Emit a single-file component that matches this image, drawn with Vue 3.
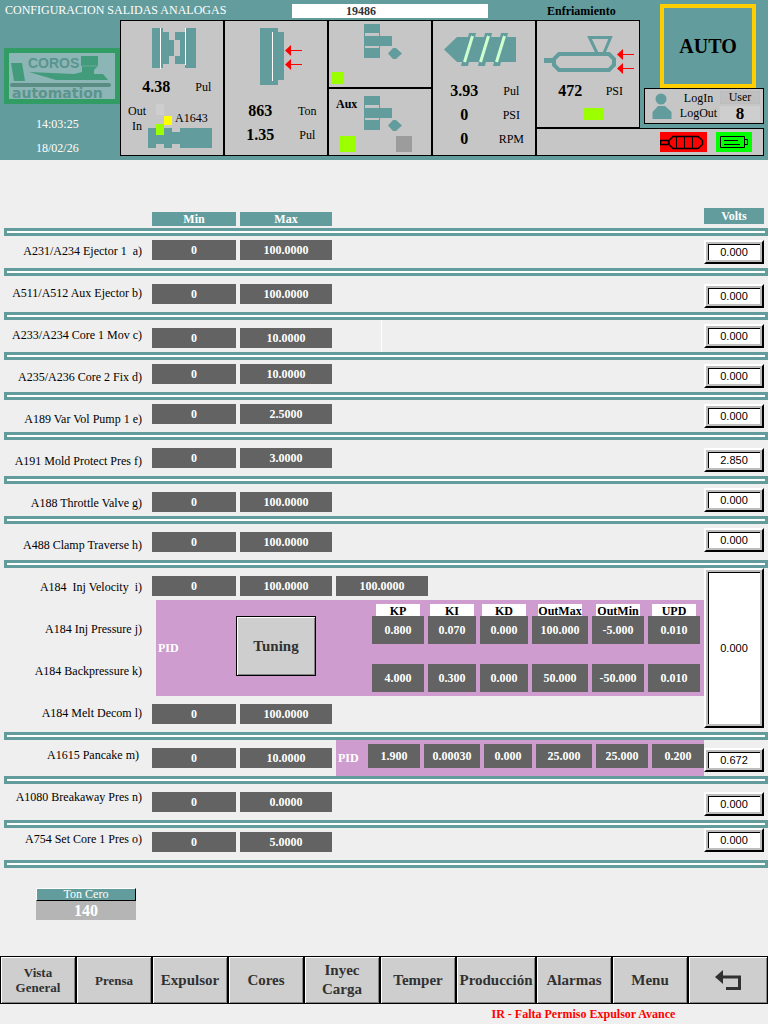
<script setup>
const LABEL_PITCH = 42
const LABEL_TOP = 13
const BAR = 8

const groups = [
  { rows: [{ name: 'A231/A234 Ejector 1  a)', height: 32, min: '0', max: '100.0000' }], volts: '0.000', align: 'upper' },
  { rows: [{ name: 'A511/A512 Aux Ejector b)', height: 36, min: '0', max: '100.0000' }], volts: '0.000', align: 'deep' },
  { rows: [{ name: 'A233/A234 Core 1 Mov c)', height: 32, min: '0', max: '10.0000', mark: true }], volts: '0.000', align: 'low' },
  { rows: [{ name: 'A235/A236 Core 2 Fix d)', height: 32, min: '0', max: '10.0000' }], volts: '0.000', align: 'upper' },
  { rows: [{ name: 'A189 Var Vol Pump 1 e)', height: 32, min: '0', max: '2.5000' }], volts: '0.000', align: 'upper' },
  { rows: [{ name: 'A191 Mold Protect Pres f)', height: 36, min: '0', max: '3.0000' }], volts: '2.850', align: 'deep' },
  { rows: [{ name: 'A188 Throttle Valve g)', height: 32, min: '0', max: '100.0000' }], volts: '0.000', align: 'low' },
  { rows: [{ name: 'A488 Clamp Traverse h)', height: 36, min: '0', max: '100.0000' }], volts: '0.000', align: 'low' },
  {
    rows: [
      { name: 'A184  Inj Velocity  i)', height: 32, min: '0', max: '100.0000', extra: '100.0000' },
      { name: 'A184 Inj Pressure j)', height: 48, panel: true },
      { name: 'A184 Backpressure k)', height: 48 },
      { name: 'A184 Melt Decom l)', height: 36, min: '0', max: '100.0000' }
    ],
    volts: '0.000',
    align: 'tall'
  },
  {
    rows: [{ name: 'A1615 Pancake m) ', height: 36, min: '0', max: '10.0000', pid: ['1.900', '0.00030', '0.000', '25.000', '25.000', '0.200'] }],
    volts: '0.672',
    align: 'deep'
  },
  { rows: [{ name: 'A1080 Breakaway Pres n)', height: 36, min: '0', max: '0.0000' }], volts: '0.000', align: 'deep' },
  { rows: [{ name: 'A754 Set Core 1 Pres o)', height: 32, min: '0', max: '5.0000' }], volts: '0.000', align: 'raised' }
]

// Labels run on an even pitch of their own, so each one is padded from its row's top.
let rowTop = BAR
let index = 0
for (const group of groups) {
  for (const row of group.rows) {
    row.labelPad = LABEL_TOP + LABEL_PITCH * index - rowTop
    rowTop += row.height
    index += 1
  }
  rowTop += BAR
}

const pidNames = ['KP', 'KI', 'KD', 'OutMax', 'OutMin', 'UPD']
const pidRows = [
  { name: 'Inj Pressure', values: ['0.800', '0.070', '0.000', '100.000', '-5.000', '0.010'] },
  { name: 'Backpressure', values: ['4.000', '0.300', '0.000', '50.000', '-50.000', '0.010'] }
]

const nav = [
  { text: 'Vista General', small: true },
  { text: 'Prensa', small: true },
  { text: 'Expulsor' },
  { text: 'Cores' },
  { text: 'Inyec Carga' },
  { text: 'Temper' },
  { text: 'Producción' },
  { text: 'Alarmas' },
  { text: 'Menu' }
]
</script>

<template>
  <div class="screen">
    <header class="top">
      <div class="titlebar">
        <h1>CONFIGURACION SALIDAS ANALOGAS</h1>
        <input class="part" value="19486" readonly aria-label="Numero de molde" />
        <span class="mode">Enfriamiento</span>
      </div>

      <div class="side">
        <svg class="logo" viewBox="0 0 116 56" width="116" height="56" role="img" aria-label="Coros automation">
          <rect width="116" height="56" fill="#319c63" />
          <rect x="5" y="5" width="106" height="46" fill="#8cb5b5" />
          <path d="M7 15H18L21 33H10Z" fill="#429c7b" />
          <path d="M25 24L70 26L78 24V18H77V8H94V18L90 22V26H99L104 32H52Z" fill="#429c7b" />
          <path d="M78 18H94" stroke="#6baa9a" />
          <rect x="6" y="35" width="101" height="4" rx="2" fill="#5a8c84" />
          <text x="24" y="20" class="brand">COROS</text>
          <text x="8" y="50" class="brand-sub">automation</text>
        </svg>
        <time>14:03:25</time>
        <time>18/02/26</time>
      </div>

      <section class="tile clamp">
        <svg viewBox="121 21 102 54" width="102" height="54" aria-hidden="true">
          <path d="M152 28H163V32H169V40H174V56H169V64H163V68H152ZM175 32H185V28H196V68H185V64H175V56H180V40H175Z" fill="#639c9c" />
          <path d="M160.500 28V69M185.500 28V65" stroke="#fff" />
        </svg>
        <p class="reading"><b>4.38</b><span>Pul</span></p>
        <svg viewBox="121 99 102 56" width="102" height="56">
          <path d="M148 128H172V132H180V128H212V148H180V144H172V148H164V144H156V148H148Z" fill="#639c9c" />
          <rect x="156" y="104" width="8" height="11" fill="#cecece" />
          <rect x="164" y="116" width="8" height="9" fill="#ff0" />
          <rect x="156" y="124" width="8" height="11" fill="#9cff00" />
          <text x="128" y="115">Out</text>
          <text x="132" y="130">In</text>
          <text x="175" y="122">A1643</text>
        </svg>
      </section>

      <section class="tile tonnage">
        <svg viewBox="225 21 102 78" width="102" height="78" aria-hidden="true">
          <path d="M260 28H278V32H284V80H278V85H260Z" fill="#639c9c" />
          <path d="M272.500 32V81" stroke="#fff" />
          <path d="M285 50.500L291 45V56ZM285 64.500L291 59V70Z" fill="#f00" />
          <path d="M290 50.500H302M290 64.500H302" stroke="#f00" />
        </svg>
        <p class="reading"><b>863</b><span>Ton</span></p>
        <p class="reading"><b>1.35</b><span>Pul</span></p>
      </section>

      <section class="tile eject">
        <svg viewBox="329 21 102 66" width="102" height="66" aria-hidden="true">
          <path d="M364 24H380V36H392V46H380V58H364Z" fill="#639c9c" />
          <path d="M365 33H379V36H365ZM365 46H379V48H365Z" fill="#c6c6c6" />
          <path d="M388 53.500L393 48H396L402 53.500L396 59H393Z" fill="#639c9c" />
          <rect x="332" y="72" width="12" height="12" fill="#9cff00" />
        </svg>
      </section>

      <section class="tile aux">
        <svg viewBox="329 89 102 66" width="102" height="66">
          <path d="M364 96H380V108H392V118H380V130H364Z" fill="#639c9c" />
          <path d="M365 105H379V108H365ZM365 118H379V120H365Z" fill="#c6c6c6" />
          <path d="M388 125.500L393 120H396L402 125.500L396 131H393Z" fill="#639c9c" />
          <rect x="340" y="136" width="16" height="16" fill="#9cff00" />
          <rect x="396" y="136" width="16" height="16" fill="#9c9c9c" />
          <text x="336" y="108" class="strong">Aux</text>
        </svg>
      </section>

      <section class="tile screw">
        <svg viewBox="433 21 102 58" width="102" height="58" aria-hidden="true">
          <path d="M444 49.500L457 37H516V62H457Z" fill="#639c9c" />
          <path d="M469 33H476L468 66H461ZM485 33H492L485 66H478ZM501 33H508L500 66H493Z" fill="#639c9c" />
          <path d="M472.500 36L464.500 62M488.500 36L480.500 62M504.500 36L496.500 62" stroke="#ceffce" stroke-width="3" />
        </svg>
        <p class="reading"><b>3.93</b><span>Pul</span></p>
        <p class="reading"><b>0</b><span>PSI</span></p>
        <p class="reading"><b>0</b><span>RPM</span></p>
      </section>

      <section class="tile barrel">
        <svg viewBox="537 21 102 58" width="102" height="58" aria-hidden="true">
          <path d="M597 53L589.500 37.500H610.500L604 53" fill="none" stroke="#639c9c" stroke-width="3" />
          <path d="M559 54H609L614 59V65L609 70H559L554 65V59Z" fill="none" stroke="#639c9c" stroke-width="4" />
          <rect x="544" y="58" width="9" height="5" fill="#639c9c" />
          <path d="M617 54.500L623 49V60ZM617 68.500L623 63V74Z" fill="#f00" />
          <path d="M622 54.500H634M622 68.500H634" stroke="#f00" />
        </svg>
        <p class="reading"><b>472</b><span>PSI</span></p>
        <i class="lamp"></i>
      </section>

      <button class="auto" type="button">AUTO</button>

      <section class="user">
        <svg viewBox="0 0 20 26" width="20" height="26" aria-hidden="true">
          <circle cx="9" cy="6" r="5.500" fill="#639c9c" />
          <path d="M6 13H13L19.500 19V26H.500V19Z" fill="#639c9c" />
        </svg>
        <div class="log">
          <button type="button">LogIn</button>
          <button type="button">LogOut</button>
        </div>
        <div class="level">
          <span>User</span>
          <b>8</b>
        </div>
      </section>

      <section class="status">
        <svg viewBox="0 0 47 20" width="47" height="20" role="img" aria-label="Calefaccion">
          <rect width="47" height="20" fill="#f00" />
          <path d="M.500 8.500H8.500V12.500H.500ZM9 8.500L13 4.500H38L42.500 8.500V12.500L38 16.500H13L9 12.500Z" fill="none" stroke="#000" stroke-width="1.500" />
          <path d="M16.500 4V16M24.500 4V16M32.500 4V16" stroke="#000" />
        </svg>
        <svg viewBox="0 0 36 20" width="36" height="20" role="img" aria-label="Bateria">
          <rect width="36" height="20" fill="#0f0" />
          <path d="M4.500 4.500H28.500V15.500H4.500ZM28.500 7.500H31.500V12.500H28.500M8 8.500H22M8 12.500H24" fill="none" stroke="#000" />
        </svg>
      </section>
    </header>

    <main>
      <table class="outputs">
        <colgroup>
          <col class="c-label" />
          <col class="c-min" />
          <col class="c-max" />
          <col />
          <col class="c-volts" />
        </colgroup>
        <thead>
          <tr>
            <td></td>
            <th scope="col"><span class="head">Min</span></th>
            <th scope="col"><span class="head">Max</span></th>
            <td></td>
            <th scope="col"><span class="head volts-head">Volts</span></th>
          </tr>
          <tr><td colspan="5"><div class="bar"></div></td></tr>
        </thead>
        <tbody v-for="group in groups" :key="group.rows[0].name" :class="group.align">
          <tr v-for="(row, i) in group.rows" :key="row.name" :style="{ height: row.height + 'px' }">
            <th scope="row" class="label"><span :style="{ paddingTop: row.labelPad + 'px' }">{{ row.name }}</span></th>
            <template v-if="row.min">
              <td><input class="cell" :value="row.min" :aria-label="row.name + ' min'" /></td>
              <td><input class="cell" :value="row.max" :aria-label="row.name + ' max'" /></td>
              <td>
                <input v-if="row.extra" class="cell extra" :value="row.extra" :aria-label="row.name + ' extra'" />
                <div v-if="row.pid" class="pid-strip">
                  <b>PID</b>
                  <input v-for="(v, n) in row.pid" :key="n" class="dark" :value="v" :aria-label="row.name + pidNames[n]" />
                </div>
                <div v-if="row.mark" class="mark"></div>
              </td>
            </template>
            <td v-if="row.panel" colspan="3" rowspan="2">
              <div class="pid-panel">
                <b>PID</b>
                <button type="button" class="tuning">Tuning</button>
                <table class="pid">
                  <thead>
                    <tr><th v-for="n in pidNames" :key="n" scope="col"><span>{{ n }}</span></th></tr>
                  </thead>
                  <tbody>
                    <tr v-for="p in pidRows" :key="p.name">
                      <td v-for="(v, n) in p.values" :key="n">
                        <input class="dark" :value="v" :aria-label="p.name + ' ' + pidNames[n]" />
                      </td>
                    </tr>
                  </tbody>
                </table>
              </div>
            </td>
            <td v-if="i === 0" :rowspan="group.rows.length">
              <input class="volts" :value="group.volts" readonly :aria-label="row.name + ' volts'" />
            </td>
          </tr>
          <tr><td colspan="5"><div class="bar"></div></td></tr>
        </tbody>
      </table>

      <div class="zero">
        <button type="button">Ton Cero</button>
        <output>140</output>
      </div>
    </main>

    <nav>
      <button v-for="item in nav" :key="item.text" type="button" :class="{ small: item.small }">{{ item.text }}</button>
      <button type="button" aria-label="Regresar">
        <svg viewBox="0 0 28 22" width="28" height="22" aria-hidden="true">
          <path d="M1 8L9 1V15Z" fill="#313131" />
          <path d="M7 8H25.500V19.500H12" fill="none" stroke="#313131" stroke-width="3" />
        </svg>
      </button>
    </nav>
    <p class="alarm">IR - Falta Permiso Expulsor Avance</p>
  </div>
</template>

<style>
body {
  margin: 0;
  background: #efefef;
}
</style>

<style scoped>
.screen {
  min-height: 100vh;
  background: #efefef;
  color: #000;
  font-family: "Liberation Serif", "Times New Roman", serif;
  font-size: 12px;
}
.screen * {
  box-sizing: border-box;
}
button,
input {
  margin: 0;
  padding: 0;
  border: 0;
  border-radius: 0;
  font: inherit;
  color: inherit;
}
input {
  display: block;
  width: 100%;
  min-width: 0;
  text-align: center;
}
p,
h1 {
  margin: 0;
}
svg {
  display: block;
  flex: none;
}

.top {
  display: grid;
  grid-template-columns: 120fr repeat(5, 104fr) 128fr;
  grid-template-rows: 20px 68px 40px 28px;
  padding-bottom: 4px;
  background: #639c9c;
}
.titlebar {
  grid-area: 1 / 1 / 2 / 7;
  display: grid;
  grid-template-columns: 292fr 196fr 152fr;
  align-items: center;
}
h1 {
  padding-left: 5px;
  font-size: 12px;
  font-weight: 400;
  line-height: 20px;
  color: #fff;
  white-space: nowrap;
}
.part {
  height: 14px;
  margin-top: 2px;
  padding-right: 58px;
  background: #fff;
  color: #313131;
  font-weight: 700;
}
.mode {
  padding: 2px 0 0 59px;
  font-weight: 700;
}
.side {
  grid-area: 2 / 1 / 5 / 2;
  padding-top: 28px;
  color: #fff;
}
.logo {
  margin: 0 0 8px 4px;
}
.brand {
  font: 700 14px "Liberation Sans", Arial, sans-serif;
  fill: #5a948c;
}
.brand-sub {
  font: 700 14px "DejaVu Sans", sans-serif;
  fill: #5a948c;
}
time {
  display: block;
  padding-left: 36px;
  line-height: 24px;
}
.tile {
  border: 1px solid #000;
  background: #c6c6c6;
  overflow: hidden;
}
.tile svg {
  margin: 0 auto;
}
.strong {
  font-weight: 700;
}
.clamp { grid-area: 2 / 2 / 5 / 3; }
.tonnage { grid-area: 2 / 3 / 5 / 4; }
.eject { grid-area: 2 / 4 / 3 / 5; }
.aux { grid-area: 3 / 4 / 5 / 5; }
.screw { grid-area: 2 / 5 / 5 / 6; }
.barrel { grid-area: 2 / 6 / 4 / 7; }
.reading {
  display: grid;
  grid-template-columns: 2fr 1fr;
  align-items: center;
  height: 24px;
  padding: 0 4px;
  text-align: center;
}
.screw .reading,
.barrel .reading {
  padding: 0 8px 0 0;
}
.reading b {
  font-size: 16px;
  line-height: 24px;
}
.barrel .reading {
  padding: 0 10px 0 4px;
}
.lamp {
  display: block;
  width: 20px;
  height: 12px;
  margin: 5px auto 0 47px;
  background: #9cff00;
}
.auto {
  grid-area: 1 / 7 / 3 / 8;
  margin: 4px 12px 0 20px;
  border: 4px solid #ffce00;
  background: #639c9c;
  font-size: 20px;
  font-weight: 700;
}
.user {
  grid-area: 3 / 7 / 4 / 8;
  display: flex;
  align-items: center;
  height: 36px;
  margin: 0 4px;
  padding: 0 3px 0 7px;
  border: 1px solid #000;
  background: #c6c6c6;
}
.log {
  flex: 1;
  display: grid;
  padding-left: 5px;
}
.log button {
  height: 15px;
  background: none;
  line-height: 15px;
}
.level {
  display: grid;
  gap: 2px;
  width: 40px;
  text-align: center;
}
.level span {
  height: 13px;
  border: 1px solid #bdbdbd;
  background: #c0c0c0;
  line-height: 11px;
}
.level b {
  height: 16px;
  background: #cecece;
  font-size: 17px;
  line-height: 16px;
}
.status {
  grid-area: 4 / 6 / 5 / 8;
  display: flex;
  align-items: center;
  justify-content: flex-end;
  gap: 9px;
  margin-right: 4px;
  padding-right: 11px;
  border: 1px solid #000;
  background: #c6c6c6;
}

main {
  padding-top: 48px;
}
table {
  border-spacing: 0;
  border-collapse: separate;
}
td,
th {
  padding: 0;
  vertical-align: top;
  font-weight: 400;
}
.outputs {
  width: 100%;
  table-layout: fixed;
}
.c-label { width: 152px; }
.c-min { width: 88px; }
.c-max { width: 96px; }
.c-volts { width: 64px; }
.outputs > thead > tr:first-child {
  height: 20px;
}
.head {
  display: block;
  height: 14px;
  margin: 4px 4px 0 0;
  background: #639c9c;
  color: #fff;
  font-weight: 700;
  line-height: 14px;
}
.volts-head {
  height: 16px;
  margin-top: 0;
  line-height: 16px;
}
.bar {
  height: 8px;
  margin-left: 4px;
  border: 3px solid #639c9c;
  background: #fff;
}
.label {
  padding-right: 10px;
  text-align: right;
}
.label span {
  display: block;
  height: 20px;
  line-height: 20px;
  white-space: pre;
}
.cell,
.dark {
  background: #636363;
  color: #fff;
  font-weight: 700;
}
.cell {
  width: calc(100% - 4px);
  height: 20px;
  margin-top: 8px;
}
.upper .cell,
.raised .cell {
  margin-top: 4px;
}
.extra {
  width: 92px;
}
.volts {
  width: calc(100% - 4px);
  height: 24px;
  margin-top: 4px;
  border: 2px solid;
  border-color: #fff #000 #000 #fff;
  background: #fff;
  box-shadow: inset 0 0 0 2px #bdbdbd, inset 3px 3px 0 #000;
  font-family: "Liberation Sans", Arial, sans-serif;
  font-size: 11px;
}
.deep .volts {
  margin-top: 8px;
}
.raised .volts {
  margin-top: 0;
}
.tall .volts {
  height: 160px;
  margin-top: 0;
}
.mark {
  width: 1px;
  height: 32px;
  margin-left: 45px;
  background: #fff;
}
.pid-panel,
.pid-strip {
  display: flex;
  background: #ce9cce;
  color: #fff;
}
.pid-panel {
  align-items: center;
  height: 96px;
  margin-left: 4px;
  padding-left: 2px;
}
.pid-panel > b {
  width: 78px;
}
.tuning {
  width: 80px;
  height: 60px;
  margin-bottom: 4px;
}
.tuning,
nav button {
  border: 1px solid #000;
  background: #cecece;
  box-shadow: inset 1px 1px 0 #fff, inset -1px -1px 0 #848484;
  color: #313131;
  font-size: 15px;
  font-weight: 700;
}
.pid {
  align-self: flex-start;
  margin-left: auto;
  margin-top: 4px;
}
.pid th span {
  display: block;
  width: 44px;
  height: 12px;
  margin: 0 auto;
  background: #fff;
  color: #000;
  font-weight: 700;
  line-height: 14px;
}
.pid th,
.pid td {
  padding-right: 4px;
}
.pid .dark {
  width: 52px;
  height: 28px;
}
.pid td:nth-child(2) .dark,
.pid td:nth-child(3) .dark {
  width: 48px;
}
.pid td:nth-child(4) .dark {
  width: 56px;
}
.pid tbody tr + tr td {
  padding-top: 20px;
}
.pid-strip {
  gap: 4px;
  height: 36px;
  padding: 4px 0 0 2px;
}
.pid-strip b {
  flex: 0 0 26px;
  line-height: 28px;
}
.pid-strip .dark {
  flex: 52 1 0;
  height: 24px;
}
.pid-strip .dark:nth-of-type(2),
.pid-strip .dark:nth-of-type(4) {
  flex-grow: 56;
}
.pid-strip .dark:nth-of-type(3) {
  flex-grow: 48;
}
.zero {
  display: grid;
  width: 100px;
  margin: 20px 0 36px 36px;
  color: #fff;
}
.zero button {
  height: 13px;
  border: 1px solid;
  border-color: #fff #000 #000 #fff;
  background: #639c9c;
  line-height: 11px;
}
.zero output {
  height: 19px;
  background: #b5b5b5;
  font-size: 16px;
  font-weight: 700;
  line-height: 19px;
  text-align: center;
}
nav {
  display: grid;
  grid-template-columns: repeat(6, 76fr) 80fr repeat(2, 76fr) 80fr;
}
nav button {
  display: flex;
  align-items: center;
  justify-content: center;
  min-width: 0;
  height: 48px;
  padding: 0 8px;
  line-height: 19px;
}
nav button:nth-child(3),
nav button:nth-child(7) {
  padding: 0;
}
nav .small {
  font-size: 13px;
  line-height: 15px;
}
.alarm {
  padding-left: 64%;
  color: #f00;
  font-weight: 700;
  line-height: 20px;
}
</style>
